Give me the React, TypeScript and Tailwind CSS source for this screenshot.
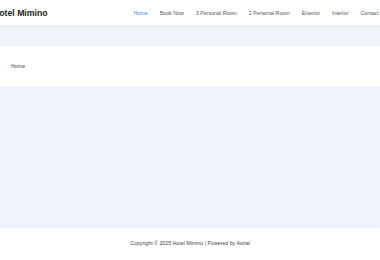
export default function App() {
  const links = ["Home", "Book Now", "3 Personal Room", "2 Personal Room", "Exterior", "Interior", "Contact"];

  return (
    <div className="flex min-h-screen flex-col overflow-hidden bg-[#f0f4fb] font-['Liberation_Sans',Arial,sans-serif]">
      <header className="flex h-[27px] items-center border-b border-[#e3e8ef] bg-white pt-px">
        <div className="ml-[-7px] flex shrink-0 items-center whitespace-nowrap">
          <h1 className="text-[8.7px] font-bold leading-none text-[#222]">Hotel Mimino</h1>
          <nav className="ml-[86px] flex gap-[12px] text-[5.3px] leading-none text-[#555]">
            {links.map((link, i) => (
              <a key={link} href="#" className={i === 0 ? "text-[#3b82f6]" : ""}>
                {link}
              </a>
            ))}
          </nav>
        </div>
      </header>

      <div className="h-[19px]" />

      <section className="flex h-[40px] items-center bg-white pl-[11px] pt-px">
        <p className="text-[5.3px] leading-none text-[#444]">Home</p>
      </section>

      <main className="flex-1" />

      <footer className="flex h-[32px] items-center justify-center bg-white shadow-[0_-2px_4px_rgba(0,0,0,0.03)]">
        <p className="text-[5.25px] leading-none text-[#444]">Copyright © 2025 Hotel Mimino | Powered by Astral</p>
      </footer>
    </div>
  );
}
